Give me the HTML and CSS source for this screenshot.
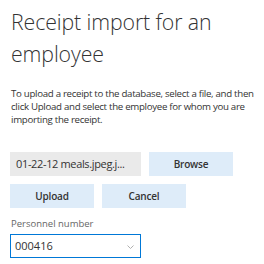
FILE: index.html
```html
<!DOCTYPE html>
<html>
<head>
<meta charset="utf-8">
<link rel="stylesheet" href="styles.css">
</head>
<body>
<div class="page">
  <h1 class="title">Receipt import for an employee</h1>
  <p class="desc">To upload a receipt to the database, select a file, and then click Upload and select the employee for whom you are importing the receipt.</p>
  <div class="row file-row">
    <div class="file-name">01-22-12 meals.jpeg.j...</div>
    <button class="btn">Browse</button>
  </div>
  <div class="row action-row">
    <button class="btn">Upload</button>
    <button class="btn">Cancel</button>
  </div>
  <label class="field-label">Personnel number</label>
  <div class="combo">
    <span class="combo-value">000416</span>
    <svg class="chevron" width="7" height="4" viewBox="0 0 7 4"><path d="M0.5 0.5 L3.5 3.5 L6.5 0.5" fill="none" stroke="#b0b0b0" stroke-width="1"/></svg>
  </div>
</div>
</body>
</html>
```
FILE: styles.css
```css
* { box-sizing: border-box; }
body {
  margin: 0;
  background: #fff;
  font-family: "Open Sans", "Noto Sans", sans-serif;
  color: #333;
}
.page {
  padding: 6px 0 0 10px;
  display: flex;
  flex-direction: column;
  align-items: flex-start;
}
.title {
  margin: 0 0 17px 1px;
  font-size: 21.3px;
  line-height: 32px;
  font-weight: 300;
  letter-spacing: -0.1px;
  color: #333;
  width: 220px;
}
.desc {
  margin: 0 0 26px 1px;
  font-size: 9.7px;
  line-height: 13px;
  letter-spacing: -0.3px;
  color: #333;
  width: 248px;
}
.row {
  display: flex;
  gap: 8px;
}
.file-row { margin-bottom: 8px; }
.action-row { margin-bottom: 8px; }
.file-name {
  width: 131px;
  height: 24px;
  background: #eaeaea;
  font-size: 11px;
  letter-spacing: -0.35px;
  line-height: 24px;
  padding-left: 6px;
  white-space: nowrap;
  overflow: hidden;
}
.btn {
  width: 84px;
  height: 24px;
  border: none;
  background: #deecf9;
  font-family: inherit;
  font-size: 10px;
  font-weight: 600;
  letter-spacing: -0.2px;
  color: #333;
  padding: 0;
}
.field-label {
  font-size: 9.5px;
  line-height: 16px;
  color: #666;
  margin-left: 1px;
  margin-bottom: 2px;
}
.combo {
  width: 131px;
  height: 24px;
  border: 1px solid #0078d7;
  display: flex;
  align-items: center;
  justify-content: space-between;
  padding: 0 6px 1px 4px;
}
.combo-value {
  font-size: 11px;
  color: #333;
}
.chevron { margin-top: 2px; }
```
